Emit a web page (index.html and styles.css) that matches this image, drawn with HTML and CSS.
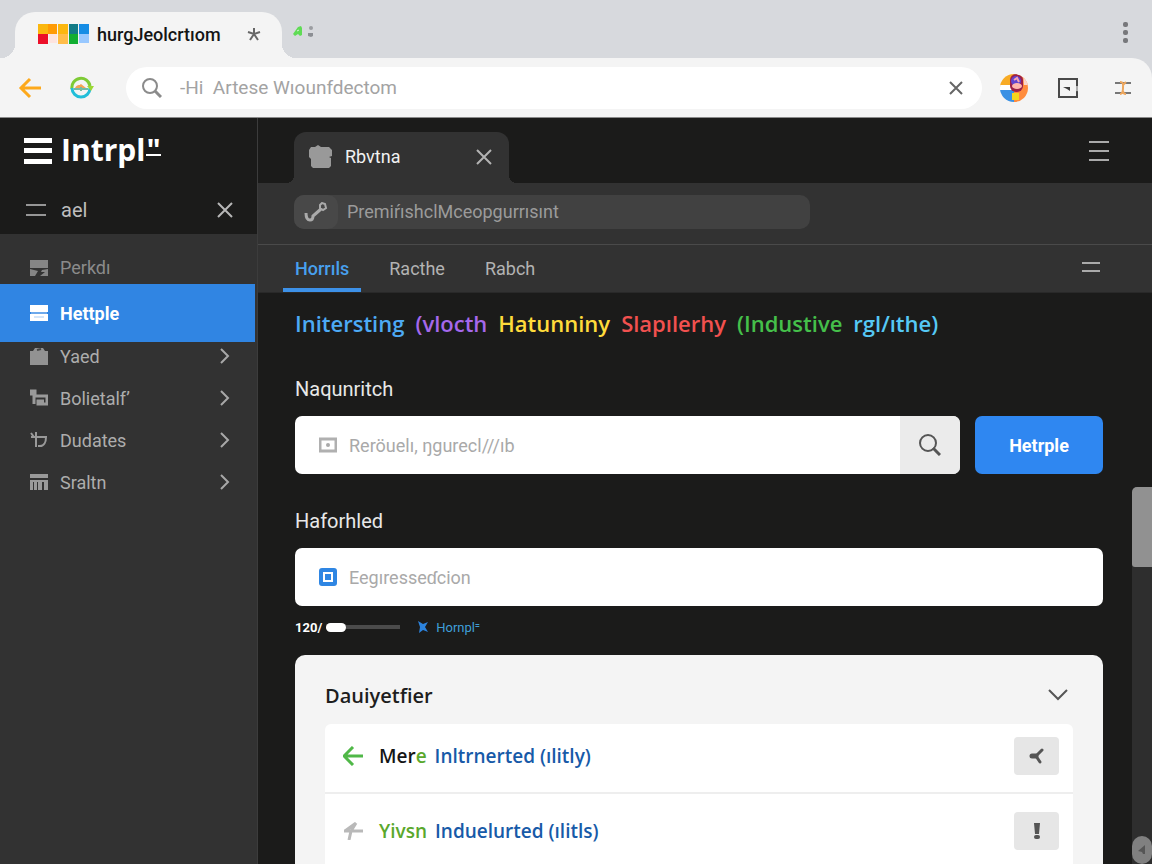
FILE: index.html
```
<!DOCTYPE html>
<html lang="en">
<head>
<meta charset="utf-8">
<meta name="viewport" content="width=device-width, initial-scale=1">
<title>Intrpl</title>
<link rel="stylesheet" href="styles.css">
</head>
<body>
<header class="browser">
  <div class="tab-strip">
    <div class="browser-tab">
      <svg class="favicon" width="51" height="20" viewBox="0 0 51 20" aria-hidden="true"><path fill="#fbb70f" d="M0 0h10v10H0zM20 0h10v10H20z"/><path fill="#ff9b05" d="M10 0h9v10h-9z"/><path fill="#127b86" d="M31 0h9v10h-9z"/><path fill="#168de5" d="M41 0h10v10H41z"/><path fill="#ec1029" d="M0 10h10v10H0z"/><path fill="#fde4df" d="M11 10h8v9h-8z"/><path fill="#ffbd4a" d="M20 10h10v10H20z"/><path fill="#12ae32" d="M31 10h9v10h-9z"/><path fill="#98c8ff" d="M41 10h10v9H41z"/></svg>
      <span class="browser-title">hurgJeolcrtıom</span>
      <button class="plain" aria-label="Close tab"><svg width="14" height="14" viewBox="0 0 14 14"><path d="M7 1v6M1 5l6 2 6-2M3 13l4-6 4 6" fill="none" stroke="#666" stroke-width="2"/></svg></button>
    </div>
    <button class="plain new-tab" aria-label="New tab"><svg width="22" height="14" viewBox="0 0 22 14"><path d="M0 9l5-7 3-1 1 2v7l-2 1-2-2-3 2z" fill="#5fdc55"/><path d="M4 6l2-1" stroke="#dff5dc" stroke-width="1"/><circle cx="18" cy="3" r="2" fill="#9b9da1"/><path d="M15 8h5v3l-2 1-3-1z" fill="#8c8f94"/></svg></button>
    <button class="plain window-menu" aria-label="Window menu"><svg width="8" height="22" viewBox="0 0 8 22" fill="#77787b"><rect x="1" y="0" width="5" height="5" rx="2"/><rect x="1" y="8" width="5" height="5" rx="2"/><rect x="1" y="16" width="5" height="5" rx="2"/></svg></button>
  </div>
  <div class="toolbar">
    <button class="plain" aria-label="Back"><svg width="24" height="22" viewBox="0 0 24 22"><path d="M23 11H3M12 2L3 11l9 9" fill="none" stroke="#fda91c" stroke-width="3"/></svg></button>
    <button class="plain" aria-label="Reload"><svg width="24" height="24" viewBox="0 0 24 24" fill="none"><path d="M2 13a9 9 0 0 1 18-3" stroke="#7ecb35" stroke-width="3"/><path d="M2 12a9 9 0 0 0 18 0" stroke="#22bed9" stroke-width="3"/><path d="M17 10h7l-3 5z" fill="#9bd833"/><path d="M5 12c2-4 4-2 6-4l5 4z" fill="#f5a253"/><path d="M4 13h14M11 11v4" stroke="#73bba5" stroke-width="2"/></svg></button>
    <label class="omnibox">
      <svg width="20" height="20" viewBox="0 0 20 20" fill="none" stroke="#8b8b8b" stroke-width="2"><circle cx="8" cy="8" r="7"/><path d="M13 13l6 6" stroke-width="3"/></svg>
      <input type="text" aria-label="Address" placeholder="‑Hi  Artese Wıounfdectom">
      <button class="plain" aria-label="Clear address"><svg width="16" height="16" viewBox="0 0 16 16"><path d="M2 2l12 12M14 2L2 14" stroke="#666" stroke-width="2"/></svg></button>
    </label>
    <button class="plain" aria-label="Profile"><svg width="30" height="30" viewBox="0 0 30 30"><defs><clipPath id="face"><circle cx="15" cy="15" r="14"/></clipPath></defs><g clip-path="url(#face)"><path fill="#f8ab24" d="M0 0h15v14H0z"/><path fill="#ff8c3d" d="M15 0h15v30H15z"/><path fill="#f9d7cd" d="M24 0h6v12h-5z"/><path fill="#3990e4" d="M0 17h15v13H0z"/><path fill="#fff" d="M0 12h12v5H0z"/><rect x="11" y="1" width="13" height="18" rx="6" fill="#9b2148"/><circle cx="17" cy="8" r="5" fill="#6044cf"/><ellipse cx="18" cy="13" rx="5" ry="3" fill="#ffb6ad"/><path d="M15 7l3-2 2 4" fill="none" stroke="#f9a3b2" stroke-width="2"/><path fill="#f4d51b" d="M13 20h7v7h-7z"/></g></svg></button>
    <button class="plain" aria-label="Panel"><svg width="22" height="22" viewBox="0 0 22 22"><path d="M20 9V2H2v18h18v-6" fill="none" stroke="#494949" stroke-width="2"/><path d="M6 10h7v4l-3-2z" fill="#3d3d3d"/><path d="M20 9v6" stroke="#666" stroke-width="1"/></svg></button>
    <button class="plain" aria-label="Extensions"><svg width="18" height="18" viewBox="0 0 18 18" fill="none"><path d="M1 4h16M1 14h16" stroke="#777" stroke-width="2"/><path d="M6 3c4 0 3 3 3 6s0 6-3 6M9 12c0 2 1 3 3 3M9 6l3-3" stroke="#eda65d" stroke-width="2"/></svg></button>
  </div>
</header>

<div class="app">
  <aside class="sidebar">
    <div class="side-head">
      <div class="brand">
        <svg width="28" height="26" viewBox="0 0 28 26" fill="#fff" aria-hidden="true"><path d="M0 0h28v5H0zM0 10h28v5H0zM0 21h28v5H0z"/></svg>
        <span class="brand-name">Intrpl<span class="brand-mark">"</span></span>
      </div>
      <div class="side-filter">
        <svg width="20" height="12" viewBox="0 0 20 12" aria-hidden="true"><path d="M0 1h20M0 11h20" stroke="#969696" stroke-width="2"/></svg>
        <span>ael</span>
        <button class="plain" aria-label="Close menu"><svg width="16" height="16" viewBox="0 0 16 16"><path d="M1 1l14 14M15 1L1 15" stroke="#b7b7b7" stroke-width="2"/></svg></button>
      </div>
    </div>
    <nav class="side-nav" aria-label="Sections">
      <a class="side-link first" href="#perkdu"><svg width="18" height="18" viewBox="0 0 18 18"><path d="M0 1h18v8H0zM0 10l8 2-3 5H0zM18 10v7h-8l5-4h-4l1-2z" fill="#858585"/></svg><span>Perkdı</span></a>
      <a class="side-link current" href="#hetrple" aria-current="page"><svg width="18" height="18" viewBox="0 0 18 18"><path d="M0 1h18v7H0zM0 10h18v7H0z" fill="#fff"/><path d="M1 9h16M4 13h10" stroke="#a9ccf4" stroke-width="1"/></svg><span>Hettple</span></a>
      <a class="side-link" href="#yaed"><svg width="18" height="20" viewBox="0 0 18 20"><path d="M0 5h3l2-3h8l2 3h3v14H0z" fill="#929292"/><path d="M7 4l4-1" stroke="#444" stroke-width="2"/></svg><span>Yaed</span><svg class="chevron" width="10" height="16" viewBox="0 0 10 16"><path d="M1 1l7 7-7 7"/></svg></a>
      <a class="side-link" href="#bolietalf"><svg width="18" height="18" viewBox="0 0 18 18" fill="none" stroke="#999" stroke-width="2"><path d="M0 2h5v3H1zM4 4v11M4 7h13v8H8v-3h6" stroke-width="3"/></svg><span>Bolietalf’</span><svg class="chevron" width="10" height="16" viewBox="0 0 10 16"><path d="M1 1l7 7-7 7"/></svg></a>
      <a class="side-link" href="#dudates"><svg width="18" height="18" viewBox="0 0 18 18" fill="none" stroke="#999" stroke-width="2"><path d="M1 2l3 4h12c0 5-2 9-6 9H8M6 1v15M1 6h4"/></svg><span>Dudates</span><svg class="chevron" width="10" height="16" viewBox="0 0 10 16"><path d="M1 1l7 7-7 7"/></svg></a>
      <a class="side-link" href="#sraltn"><svg width="18" height="18" viewBox="0 0 18 18" fill="#999"><path d="M0 1h18v4H0zM0 7h18v10h-4V9h-2v8H8V9H7v8H4V9H3v8H0z"/></svg><span>Sraltn</span><svg class="chevron" width="10" height="16" viewBox="0 0 10 16"><path d="M1 1l7 7-7 7"/></svg></a>
    </nav>
  </aside>

  <main class="main">
    <div class="doc-tabs">
      <div class="doc-tab">
        <svg width="24" height="24" viewBox="0 0 24 24" aria-hidden="true"><path d="M0 5l2-3h4l3-2 3 2h8l3 3v6l-3 1 2 1v8l-2 2H4l-2-2v-7L0 12z" fill="#999"/></svg>
        <span>Rbvtna</span>
        <button class="plain" aria-label="Close document"><svg width="16" height="16" viewBox="0 0 16 16"><path d="M1 1l14 14M15 1L1 15" stroke="#b3b3b3" stroke-width="2"/></svg></button>
      </div>
      <button class="plain" aria-label="Main menu"><svg width="20" height="20" viewBox="0 0 20 20"><path d="M0 1h20M0 10h20M0 19h20" stroke="#aaa" stroke-width="2"/></svg></button>
    </div>
    <div class="doc-bar">
      <label class="doc-address">
        <span class="doc-key"><svg width="24" height="20" viewBox="0 0 24 20" fill="none" stroke="#aaa" stroke-width="3"><path d="M2 11c0 4 1 7 4 7 2 0 3-2 3-4l8-7"/><path d="M16 3l2-2 3 1 1 4-3 2-3-2z" stroke-width="2"/></svg></span>
        <input type="text" aria-label="Document address" placeholder="PremiŕıshclMceopgurrısınt">
      </label>
    </div>
    <nav class="page-nav" aria-label="Pages">
      <a class="page-link active" href="#home" aria-current="page">Horrıls</a>
      <a class="page-link" href="#racthe">Racthe</a>
      <a class="page-link" href="#rabch">Rabch</a>
      <button class="plain" aria-label="Page options"><svg width="18" height="10" viewBox="0 0 18 10"><path d="M0 1h18M0 9h18" stroke="#aaa" stroke-width="2"/></svg></button>
    </nav>

    <div class="content">
      <h1 class="headline"><span class="blue">Initersting</span> <span class="violet">(vlocth</span> <span class="yellow">Hatunniny</span> <span class="red">Slapılerhy</span> <span class="green">(Industive</span> <span class="cyan">rgl/ıthe)</span></h1>

      <form class="form">
        <label class="field-label" for="query">Naqunritch</label>
        <div class="query-row">
          <div class="field">
            <svg width="18" height="16" viewBox="0 0 18 16" aria-hidden="true"><path d="M1 2h16v12H1z" fill="none" stroke="#b0b0b0" stroke-width="3"/><circle cx="9" cy="8" r="2" fill="#aaa"/></svg>
            <input id="query" type="text" placeholder="Reröuelı, ŋgurecl///ıb">
            <button class="search" type="button" aria-label="Search"><svg width="22" height="22" viewBox="0 0 22 22" fill="none" stroke="#555"><circle cx="9" cy="9" r="8" stroke-width="2"/><path d="M14 14l7 7" stroke-width="3"/></svg></button>
          </div>
          <button class="primary" type="button">Hetrple</button>
        </div>

        <label class="field-label" for="registration">Haforhled</label>
        <div class="field">
          <svg width="18" height="18" viewBox="0 0 18 18" aria-hidden="true"><rect width="18" height="18" rx="3" fill="#2f86e3"/><path d="M5 5h8v8H5z" fill="#2f86e3" stroke="#fff" stroke-width="2"/></svg>
          <input id="registration" type="text" placeholder="Eegıresseɗcion">
        </div>

        <div class="meter">
          <label for="level">120/</label>
          <input id="level" type="range" min="0" max="100" value="0">
          <a class="meter-link" href="#more"><svg width="10" height="12" viewBox="0 0 10 12" aria-hidden="true"><path d="M0 0l5 3 5-2-3 5 3 5-5-2-4 3 1-6z" fill="#2c83de"/></svg><span>Hornpl⁼</span></a>
        </div>
      </form>

      <section class="card">
        <div class="card-head">
          <h2>Dauiyetfier</h2>
          <button class="plain" aria-label="Collapse"><svg width="20" height="12" viewBox="0 0 20 12"><path d="M1 1l9 9 9-9" fill="none" stroke="#555" stroke-width="2"/></svg></button>
        </div>
        <ul class="list">
          <li class="item">
            <svg width="20" height="20" viewBox="0 0 20 20" aria-hidden="true"><path d="M20 10H2M10 1l-9 9 9 9" fill="none" stroke="#50b848" stroke-width="3"/></svg>
            <a class="item-text" href="#mere"><span class="ink">Mer<span class="leaf">e</span></span><span>Inltrnerted (ılitly)</span></a>
            <button class="item-action" aria-label="Share"><svg width="16" height="18" viewBox="0 0 16 18" fill="none" stroke="#555" stroke-linecap="round"><path d="M3 9h4" stroke-width="5"/><path d="M7 9l6-6M7 9l4 6" stroke-width="3"/></svg></button>
          </li>
          <li class="item">
            <svg width="20" height="18" viewBox="0 0 20 18" aria-hidden="true"><path d="M20 9H1M13 1L8 9 6 18M13 1L2 9" fill="none" stroke="#b9b9b9" stroke-width="3"/></svg>
            <a class="item-text" href="#yivsn"><span class="leaf">Yivsn</span><span>Induelurted (ılitls)</span></a>
            <button class="item-action" aria-label="Alert"><svg width="8" height="18" viewBox="0 0 8 18" fill="#555"><path d="M1 1h6L6 12H2z"/><rect x="1" y="13" width="6" height="4" rx="2"/></svg></button>
          </li>
        </ul>
      </section>
    </div>

    <div class="scrollbar" aria-hidden="true">
      <div class="scroll-thumb"></div>
      <div class="scroll-end"><svg width="8" height="10" viewBox="0 0 8 10"><path d="M0 6l7-6v9H5L4 7z" fill="#555"/></svg></div>
    </div>
  </main>
</div>
</body>
</html>
```
FILE: styles.css
```
* {
  box-sizing: border-box;
}

body {
  margin: 0;
  height: 100vh;
  display: flex;
  flex-direction: column;
  overflow: hidden;
  background: #1b1b1a;
  color: #bdbdbd;
  font-family: Roboto, "Liberation Sans", sans-serif;
  font-size: 18px;
}

svg {
  display: block;
  flex: none;
}

a {
  color: inherit;
  text-decoration: none;
}

button,
input {
  font: inherit;
}

input[type="text"] {
  flex: 1;
  min-width: 0;
  padding: 0;
  border: 0;
  outline: 0;
  background: none;
}

.plain {
  flex: none;
  padding: 0;
  border: 0;
  background: none;
}

/* Browser frame */
.browser {
  flex: none;
  background: #d7d9dd;
}

.tab-strip {
  display: flex;
  align-items: center;
  height: 58px;
  padding: 0 22px 0 15px;
}

.browser-tab {
  position: relative;
  align-self: flex-end;
  display: flex;
  align-items: center;
  width: 267px;
  height: 46px;
  padding: 0 21px 2px 23px;
  border-radius: 20px 20px 0 0;
  background: #f4f4f4;
}

.browser-tab::before,
.browser-tab::after {
  content: "";
  position: absolute;
  bottom: 0;
  width: 14px;
  height: 14px;
}

.browser-tab::before {
  right: 100%;
  background: radial-gradient(circle at 0 0, transparent 14px, #f4f4f4 14px);
}

.browser-tab::after {
  left: 100%;
  background: radial-gradient(circle at 100% 0, transparent 14px, #f4f4f4 14px);
}

.browser-title {
  flex: 1;
  margin-left: 8px;
  color: #151515;
  font-size: 18px;
  font-weight: 500;
  white-space: nowrap;
}

.new-tab {
  margin-left: 11px;
  padding-top: 6px;
}

.window-menu {
  margin-left: auto;
  padding-top: 8px;
}

.toolbar {
  display: flex;
  align-items: center;
  height: 60px;
  padding: 0 20px 0 18px;
  border-bottom: 1px solid #8a8a8a;
  border-radius: 0 20px 0 0;
  background: #f4f4f4;
}

.toolbar > * + * {
  margin-left: 28px;
}

.toolbar > .omnibox {
  margin-left: 32px;
}

.toolbar > .omnibox + .plain {
  margin-left: 17px;
}

.toolbar > .plain:last-child {
  margin-left: 35px;
}

.omnibox {
  flex: 1;
  display: flex;
  align-items: center;
  gap: 18px;
  height: 42px;
  padding: 0 18px 0 16px;
  border-radius: 21px;
  background: #fff;
}

.omnibox input {
  font-size: 19px;
  white-space: pre;
}

.omnibox ::placeholder {
  color: #a3a3a3;
}

/* Application */
.app {
  flex: 1;
  min-height: 0;
  display: flex;
}

.sidebar {
  flex: none;
  width: 258px;
  border-right: 1px solid #3c3c3c;
  background: #323232;
}

.side-head {
  padding: 10px 24px 0;
  background: #1b1b1a;
}

.brand {
  display: flex;
  align-items: center;
  gap: 9px;
  height: 46px;
}

.brand-name {
  display: flex;
  padding-bottom: 2px;
  color: #fff;
  font-family: "Open Sans", sans-serif;
  font-size: 30px;
  font-weight: 700;
  line-height: 42px;
}

.brand-mark {
  align-self: flex-start;
  height: 27px;
  margin-left: 1px;
  border-bottom: 2px solid #fff;
}

.side-filter {
  display: flex;
  align-items: center;
  gap: 15px;
  height: 60px;
  padding: 12px 0 0 2px;
}

.side-filter span {
  flex: 1;
  font-size: 20px;
}

.side-nav {
  padding-top: 12px;
}

.side-link {
  display: flex;
  align-items: center;
  gap: 12px;
  height: 42px;
  padding: 0 27px 0 30px;
  color: #adadad;
}

.side-link span {
  flex: 1;
}

.side-link.first {
  height: 38px;
  padding-top: 5px;
  color: #8b8b8b;
}

.side-link.current {
  height: 58px;
  margin-right: 2px;
  margin-bottom: -7px;
  background: #3085e3;
  color: #fff;
  font-weight: 700;
}

.chevron {
  fill: none;
  stroke: #a8a8a8;
  stroke-width: 2px;
}

.main {
  position: relative;
  flex: 1;
  min-width: 0;
  overflow: hidden;
}

.doc-tabs {
  display: flex;
  align-items: center;
  justify-content: space-between;
  height: 65px;
  padding: 0 43px 0 36px;
}

.doc-tab {
  position: relative;
  align-self: flex-end;
  display: flex;
  align-items: center;
  gap: 12px;
  width: 215px;
  height: 51px;
  padding: 0 17px 2px 15px;
  border-radius: 12px 12px 0 0;
  background: #323232;
  color: #f1f1f1;
}

.doc-tab::before,
.doc-tab::after {
  content: "";
  position: absolute;
  bottom: 0;
  width: 8px;
  height: 8px;
}

.doc-tab::before {
  right: 100%;
  background: radial-gradient(circle at 0 0, transparent 8px, #323232 8px);
}

.doc-tab::after {
  left: 100%;
  background: radial-gradient(circle at 100% 0, transparent 8px, #323232 8px);
}

.doc-tab span {
  flex: 1;
}

.doc-bar {
  display: flex;
  align-items: center;
  height: 62px;
  padding: 0 36px 4px;
  border-bottom: 1px solid #4a4a4a;
  background: #323232;
}

.doc-address {
  display: flex;
  align-items: center;
  width: 516px;
  height: 34px;
  gap: 9px;
  border-radius: 10px;
  background: #414141;
}

.doc-key {
  display: grid;
  place-items: center;
  width: 44px;
  height: 34px;
  border-radius: 10px;
  background: #484848;
}

.doc-address ::placeholder {
  color: #9b9b9b;
}

.page-nav {
  display: flex;
  align-items: center;
  gap: 16px;
  height: 48px;
  padding: 0 52px 0 25px;
  border-bottom: 1px solid #292929;
  background: #323232;
}

.page-link {
  display: flex;
  align-items: center;
  height: 100%;
  padding: 4px 12px 0;
  border-bottom: 4px solid transparent;
  color: #b3b3b3;
}

.page-link.active {
  border-color: #3d91e8;
  color: #48a0ee;
  font-weight: 500;
}

.page-nav .plain {
  margin-left: auto;
  padding-bottom: 4px;
}

.content {
  padding: 13px 49px 0 37px;
}

.headline {
  display: flex;
  gap: 11px;
  margin: 0 0 34px;
  font-family: "Open Sans", sans-serif;
  font-size: 22px;
  font-weight: 600;
  line-height: 34px;
  white-space: nowrap;
}

.blue {
  color: #4daaf5;
}

.violet {
  color: #a568ec;
}

.yellow {
  color: #ffdb3b;
}

.red {
  color: #f2514f;
}

.green {
  color: #45c04a;
}

.cyan {
  color: #56c9f5;
}

.field-label {
  display: block;
  color: #e8e8e8;
  font-size: 20px;
  line-height: 30px;
}

.query-row {
  display: flex;
  gap: 15px;
  margin: 12px 0 32px;
}

.field {
  flex: 1;
  display: flex;
  align-items: center;
  gap: 12px;
  height: 58px;
  padding-left: 24px;
  overflow: hidden;
  border-radius: 7px;
  background: #fff;
}

.field ::placeholder {
  color: #a9a9a9;
}

.field-label + .field {
  margin-top: 12px;
}

.search {
  display: grid;
  place-items: center;
  width: 60px;
  height: 100%;
  padding: 0;
  border: 0;
  background: #ebebeb;
}

.primary {
  width: 128px;
  padding: 0;
  border: 0;
  border-radius: 7px;
  background: #2f87f1;
  color: #fff;
  font-weight: 700;
}

.meter {
  display: flex;
  align-items: center;
  height: 20px;
  margin-top: 11px;
  color: #fff;
  font-size: 13px;
}

.meter label {
  font-weight: 700;
}

#level {
  appearance: none;
  width: 74px;
  height: 10px;
  margin: 0 18px 0 4px;
  background: linear-gradient(#4b4b4b, #4b4b4b) center / 100% 4px no-repeat;
}

#level::-webkit-slider-thumb {
  appearance: none;
  width: 20px;
  height: 9px;
  border-radius: 5px;
  background: #fff;
}

.meter-link {
  display: flex;
  align-items: center;
  gap: 8px;
  color: #3f9fd8;
}

.card {
  margin-top: 18px;
  padding: 20px 30px 0;
  border-radius: 10px 10px 0 0;
  background: #f4f4f4;
}

.card-head {
  display: flex;
  align-items: center;
  justify-content: space-between;
  height: 40px;
  margin-bottom: 9px;
  padding-right: 5px;
}

.card h2 {
  margin: 0;
  color: #1d1d1d;
  font-family: "Open Sans", sans-serif;
  font-size: 20px;
  font-weight: 600;
}

.list {
  margin: 0;
  padding: 0;
  border-radius: 6px 6px 0 0;
  background: #fff;
  list-style: none;
}

.item {
  display: flex;
  align-items: center;
  gap: 16px;
  height: 68px;
  padding: 0 14px 4px 18px;
}

.item + .item {
  height: 80px;
  border-top: 2px solid #eee;
}

.item-text {
  flex: 1;
  display: flex;
  gap: 8px;
  color: #175aa8;
  font-family: "Open Sans", sans-serif;
  font-size: 19px;
  font-weight: 600;
}

.ink {
  color: #151515;
}

.leaf {
  color: #5aa82c;
}

.item-action {
  display: grid;
  place-items: center;
  width: 45px;
  height: 38px;
  padding: 0;
  border: 0;
  border-radius: 4px;
  background: #e6e6e6;
}

/* Scrollbar overlay along the right edge */
.scrollbar {
  position: absolute;
  top: 49.5%;
  right: 0;
  bottom: 0;
  width: 20px;
  display: flex;
  flex-direction: column;
  justify-content: space-between;
  border-radius: 5px 0 0 0;
  background: #2e2e2e;
}

.scroll-thumb {
  height: 80px;
  border-radius: 5px 0 0 3px;
  background: #919191;
}

.scroll-end {
  display: grid;
  place-items: center;
  height: 28px;
  border-radius: 10px;
  background: #808080;
}
```
